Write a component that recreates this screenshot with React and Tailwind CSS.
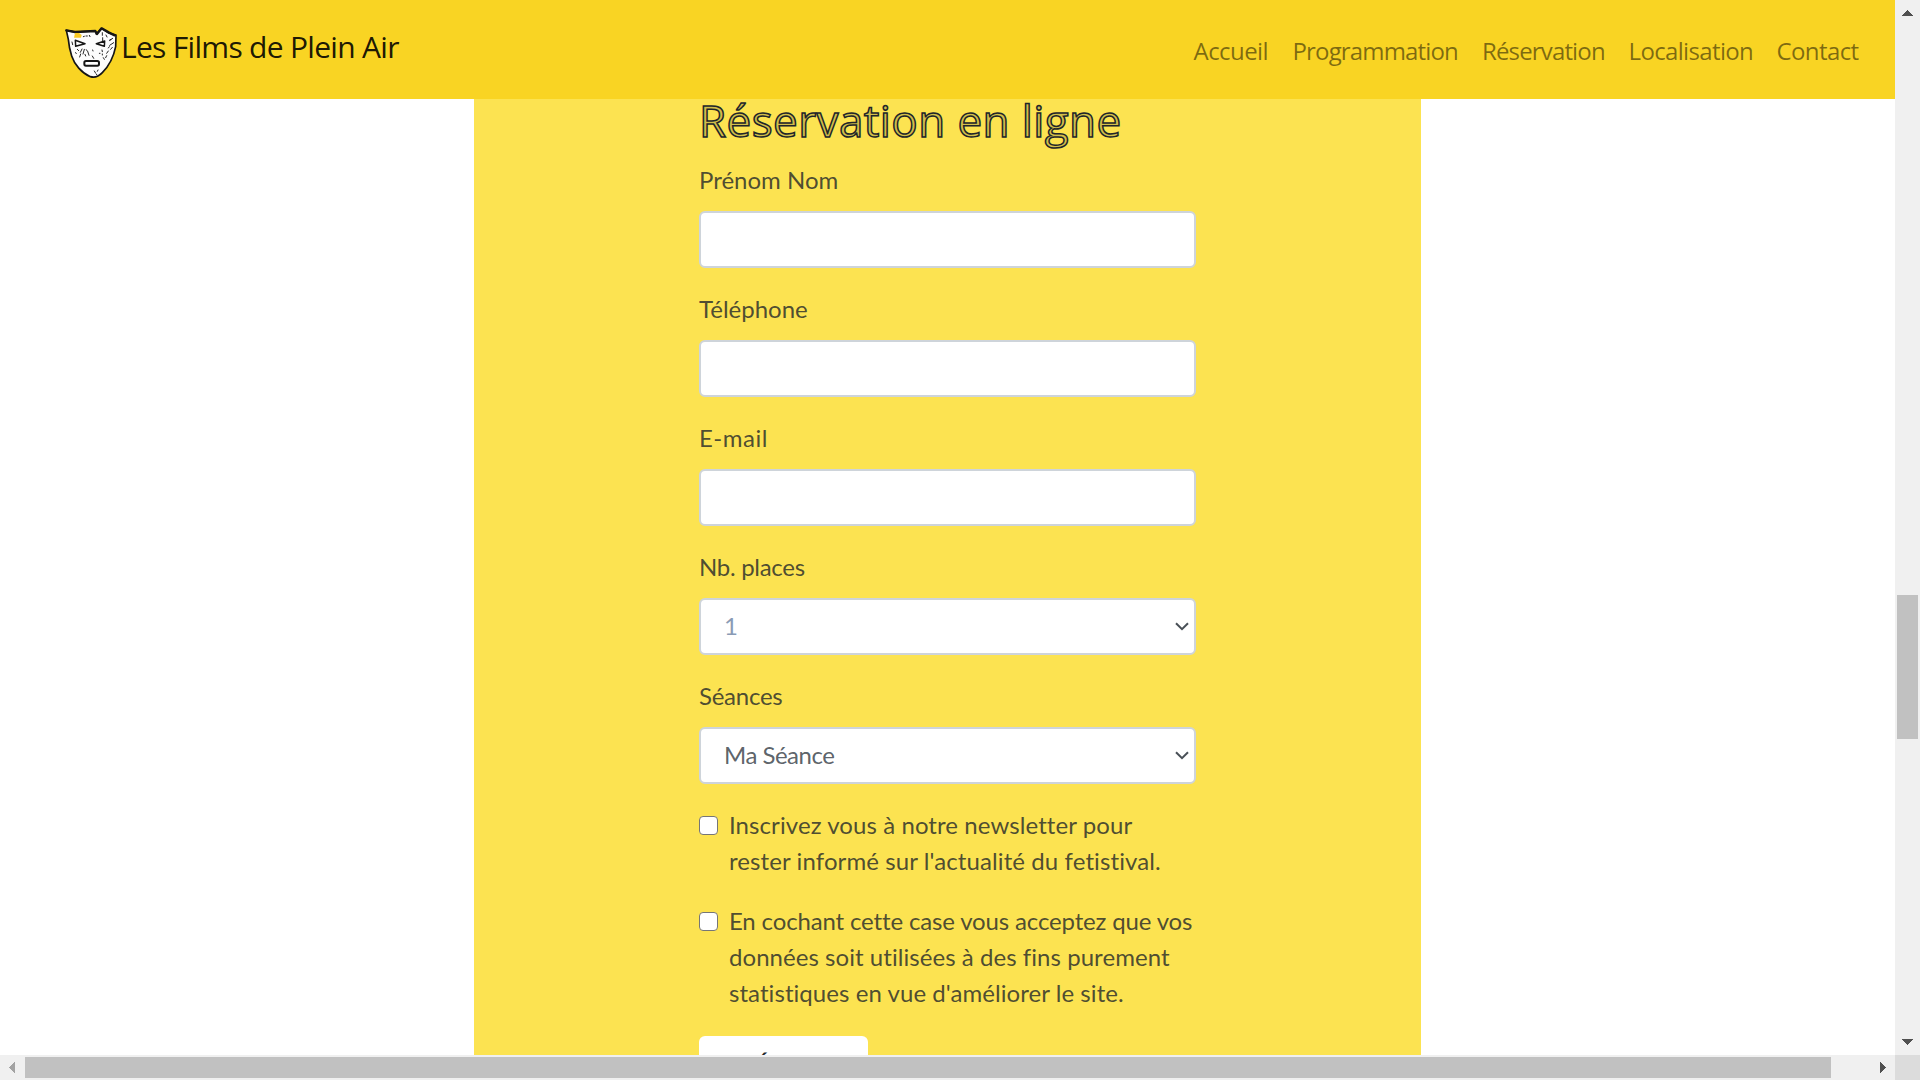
import React from "react";

const NAV_LINKS = [
  { label: "Accueil", cls: "w-[75px] tracking-[-0.55px]" },
  { label: "Programmation", cls: "w-[165.5px] tracking-[-0.85px]" },
  { label: "Réservation", cls: "w-[122.5px] tracking-[-0.85px]" },
  { label: "Localisation", cls: "w-[124px] tracking-[-0.65px]" },
  { label: "Contact", cls: "w-[82.5px] tracking-[-0.6px]" },
];

const SKETCH = "text-[#212529]/80";

function MaskLogo() {
  return (
    <svg viewBox="0 0 192 192" className="size-16 shrink-0" fill="none" stroke="#161616" strokeLinecap="round" strokeLinejoin="round">
      <path d="M19 31 L45 36 L106 33 L109 42 L124 25 L146 39 L168 45 L167 80 C162 105 150 135 127 158 Q110 176 91 170 C65 159 43 133 35 108 Q27 82 25 58 Z" fill="#fdfdfd" strokeWidth="5" />
      <path d="M19 31 L45 36 L106 33 L111 42 L125 25 L146 37 L164 46" strokeWidth="7" />
      <path d="M45 39h12l8 6-2 8H42z" fill="#f9c923" stroke="none" />
      <path d="M46 61 L75 71 L47 79 Z" strokeWidth="4.5" fill="#fff" />
      <path d="M134 63 L109 71 L133 79 Z" strokeWidth="4.5" fill="#fff" />
      <rect x="73" y="123" width="44" height="14" rx="5" strokeWidth="6" fill="#fff" />
      <path
        d="M127 38v8M128 53v9M138 45l3 6M158 55l-8 6M161 68l-12 8M148 61l5-3M70 50l3-1M78 48h4M88 46l2 4M36 66l2 8M66 87l-5 10M73 88l-4 14M62 102l-3 9M75 103l2 5M83 94l4 12M79 89l2 3M98 90l1 3M97 108l4 7M126 90l1 5M127 102v3M130 113l3 5M145 93l-5 7M140 107l-3 6M157 82l-5 6M148 80l-3 4M103 153l3 5M108 161l3 4M114 150l-2 4M52 88l4 4M46 98l3 2M118 100h2"
        strokeWidth="2.8"
      />
    </svg>
  );
}

function Label({ children, cls = "" }) {
  return <label className={`-mt-px mb-[13px] block leading-9 ${SKETCH} ${cls}`}>{children}</label>;
}

function TextField({ label, cls }) {
  return (
    <div className="flow-root pb-6">
      <Label cls={cls}>{label}</Label>
      <input type="text" className="block h-[57px] w-full rounded-[6px] border-2 border-[#ced4da] bg-white px-[18px] outline-none" />
    </div>
  );
}

function SelectField({ label, value, valueCls, cls }) {
  return (
    <div className="flow-root pb-6">
      <Label cls={cls}>{label}</Label>
      <div className="flex h-[57px] w-full items-center justify-between rounded-[6px] border-2 border-[#ced4da] bg-white pr-[5px] pl-[23px]">
        <span className={`pb-[2px] ${valueCls}`}>{value}</span>
        <svg viewBox="0 0 14 9" className="h-[9px] w-[14px]" fill="none" stroke="#495057" strokeWidth="2">
          <path d="M1 1.2 L7 7.2 L13 1.2" />
        </svg>
      </div>
    </div>
  );
}

function CheckRow({ lines }) {
  return (
    <div className="mb-6 flex">
      <div className="mt-[8px] mr-[11px] h-[19px] w-[19px] shrink-0 rounded-[4px] border border-[#767676] bg-white" />
      <div className={`-mt-px mb-px leading-9 whitespace-nowrap ${SKETCH}`}>
        {lines.map((l) => (
          <div key={l.text} className={l.cls}>{l.text}</div>
        ))}
      </div>
    </div>
  );
}

function Arrow({ d, color, box, cls }) {
  return (
    <svg viewBox={box} className={cls} fill={color} shapeRendering="crispEdges">
      <path d={d} />
    </svg>
  );
}

export default function App() {
  return (
    <div className="flex h-[1080px] w-[1920px] flex-col overflow-hidden bg-white">
      <div className="flex h-[1055px]">
        <div className="flex w-[1895px] flex-col overflow-hidden">
          <nav className="z-10 flex h-[99px] shrink-0 items-center justify-between bg-[#f9d423] font-['Open_Sans',sans-serif]">
            <div className="flex h-full items-start pt-5 pl-[60px]">
              <MaskLogo />
              <span className="-ml-[3px] pt-[4px] text-[30px] leading-[45px] tracking-[-0.7px] whitespace-nowrap text-black/90">
                Les Films de Plein Air
              </span>
            </div>
            <div className="flex gap-6 pt-[2px] pr-[36px] text-[24px] leading-9 text-black/50">
              {NAV_LINKS.map((l) => (
                <a key={l.label} className={`whitespace-nowrap ${l.cls}`}>{l.label}</a>
              ))}
            </div>
          </nav>

          <main className="ml-[474px] h-[956px] w-[947px] bg-[#fce351] pl-[225px] font-['Lato',sans-serif] text-[24px] [font-variant-ligatures:none]">
            <form className="-mt-[6px] w-[497px]">
              <h2 className="mb-3 h-[58px] font-['Open_Sans',sans-serif] text-[44px] leading-[54px] font-medium tracking-[0.4px] whitespace-nowrap text-[#212529]/20 [-webkit-text-stroke:1.5px_#212529]">
                Réservation en ligne
              </h2>
              <TextField label="Prénom Nom" />
              <TextField label="Téléphone" />
              <TextField label="E-mail" cls="tracking-[0.5px]" />
              <SelectField label="Nb. places" cls="tracking-[-0.3px]" value="1" valueCls="text-[#8a9bb5]" />
              <SelectField label="Séances" cls="tracking-[-0.25px]" value="Ma Séance" valueCls="tracking-[-0.5px] text-[#495057]/90" />
              <CheckRow
                lines={[
                  { text: "Inscrivez vous à notre newsletter pour", cls: "tracking-[0.08px]" },
                  { text: "rester informé sur l'actualité du fetistival.", cls: "tracking-[0.1px]" },
                ]}
              />
              <CheckRow
                lines={[
                  { text: "En cochant cette case vous acceptez que vos", cls: "tracking-[-0.15px]" },
                  { text: "données soit utilisées à des fins purement", cls: "tracking-[0.05px]" },
                  { text: "statistiques en vue d'améliorer le site.", cls: "tracking-[0.06px]" },
                ]}
              />
              <button type="button" className="block h-[57px] w-[169px] rounded-[6px] bg-white pt-[11px] pb-[10px] pl-[41px] text-left leading-9 text-[#212529]">
                RÉSERVER
              </button>
            </form>
          </main>
        </div>

        <div className="flex w-[25px] flex-col items-center bg-[#f0f0f0]">
          <Arrow d="M5.5 0 L11 6 H0 Z" box="0 0 11 6" color="#505050" cls="mt-[10px] h-[6px] w-[11px]" />
          <div className="mt-[579px] h-[144px] w-[21px] bg-[#c1c1c1]" />
          <Arrow d="M0 0 H11 L5.5 6 Z" box="0 0 11 6" color="#505050" cls="mt-[300px] h-[6px] w-[11px]" />
        </div>
      </div>

      <div className="z-10 flex h-[25px]">
        <div className="flex w-[1895px] items-center bg-[#f0f0f0]">
          <Arrow d="M6 0 V11 L0 5.5 Z" box="0 0 6 11" color="#a3a3a3" cls="ml-[9px] h-[11px] w-[6px]" />
          <div className="ml-[10px] h-[21px] w-[1806px] bg-[#c1c1c1]" />
          <Arrow d="M0 0 L6 5.5 L0 11 Z" box="0 0 6 11" color="#505050" cls="ml-[49px] h-[11px] w-[6px]" />
        </div>
        <div className="w-[25px] bg-[#dcdcdc]" />
      </div>
    </div>
  );
}
